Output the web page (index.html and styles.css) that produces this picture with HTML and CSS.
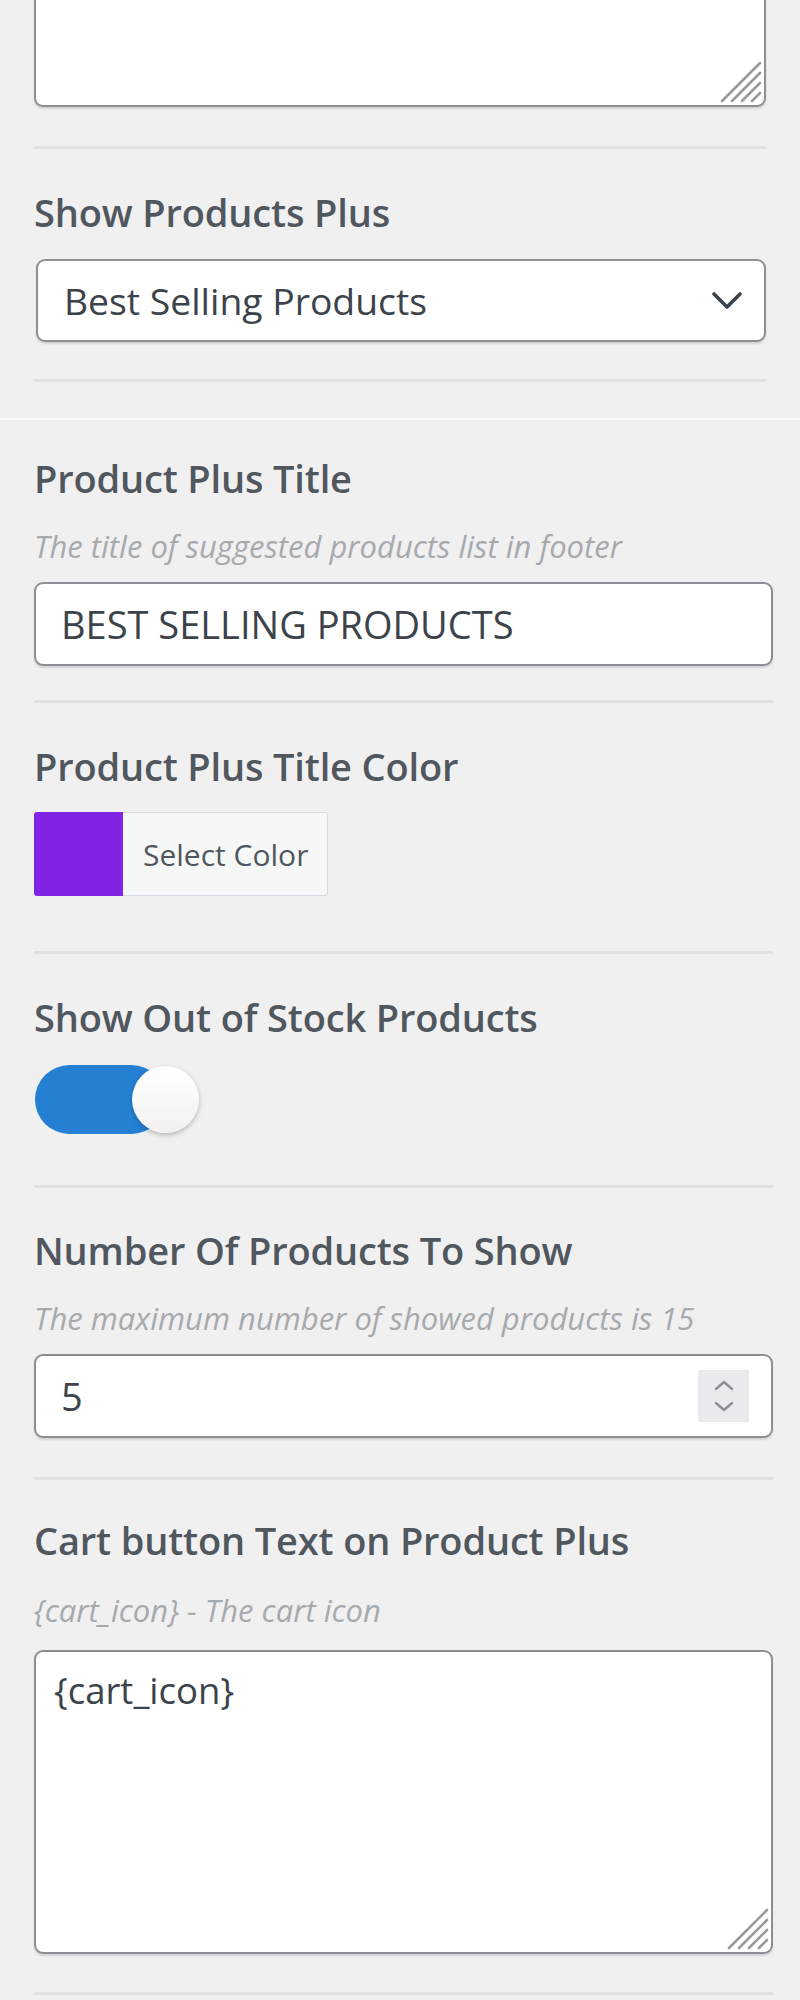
FILE: index.html
```html
<!DOCTYPE html>
<html>
<head>
<meta charset="utf-8">
<link rel="stylesheet" href="styles.css">
</head>
<body>
<div class="panel">
  <div class="sec sec-a">
    <div class="field field-first">
      <div class="area area-top">
        <svg class="grip" width="44" height="44" viewBox="0 0 44 44"><g stroke="#9a9a9c" stroke-width="2.6" stroke-linecap="round"><line x1="4" y1="42" x2="42" y2="4"/><line x1="14" y1="42" x2="42" y2="14"/><line x1="24" y1="42" x2="42" y2="24"/><line x1="34" y1="42" x2="42" y2="34"/></g></svg>
      </div>
    </div>
    <div class="field">
      <div class="label">Show Products Plus</div>
      <div class="box select">
        <span class="val">Best Selling Products</span>
        <svg class="chev" width="34" height="20" viewBox="0 0 34 20"><polyline points="4,3 17,16 30,3" fill="none" stroke="#3c434a" stroke-width="3.6" stroke-linecap="round" stroke-linejoin="round"/></svg>
      </div>
    </div>
  </div>
  <div class="sec sec-b">
    <div class="field field-b1">
      <div class="label">Product Plus Title</div>
      <div class="help">The title of suggested products list in footer</div>
      <div class="box input"><span class="val">BEST SELLING PRODUCTS</span></div>
    </div>
    <div class="field field-pick">
      <div class="label">Product Plus Title Color</div>
      <div class="picker">
        <span class="swatch"></span>
        <span class="picker-text">Select Color</span>
      </div>
    </div>
    <div class="field field-tog">
      <div class="label">Show Out of Stock Products</div>
      <div class="toggle"><span class="knob"></span></div>
    </div>
    <div class="field field-num">
      <div class="label">Number Of Products To Show</div>
      <div class="help">The maximum number of showed products is 15</div>
      <div class="box input num">
        <span class="val">5</span>
        <span class="spin">
          <svg width="24" height="40" viewBox="0 0 24 40"><g fill="none" stroke="#8c8f94" stroke-width="2.4" stroke-linecap="round" stroke-linejoin="round"><polyline points="4,13 12,6 20,13"/><polyline points="4,27 12,34 20,27"/></g></svg>
        </span>
      </div>
    </div>
    <div class="field field-cart">
      <div class="label">Cart button Text on Product Plus</div>
      <div class="help help-cart">{cart_icon} - The cart icon</div>
      <div class="area area-cart">
        <span class="area-text">{cart_icon}</span>
        <svg class="grip" width="44" height="44" viewBox="0 0 44 44"><g stroke="#9a9a9c" stroke-width="2.6" stroke-linecap="round"><line x1="4" y1="42" x2="42" y2="4"/><line x1="14" y1="42" x2="42" y2="14"/><line x1="24" y1="42" x2="42" y2="24"/><line x1="34" y1="42" x2="42" y2="34"/></g></svg>
      </div>
    </div>
  </div>
</div>
</body>
</html>
```
FILE: styles.css
```css
html, body {
  margin: 0;
  padding: 0;
  background: #f0f0f1;
}
body {
  font-family: "Open Sans", "Noto Sans", sans-serif;
  color: #50575e;
}
.panel {
  width: 800px;
}
.sec-a {
  padding: 0 34px 36px 34px;
  border-bottom: 2px solid #fbfbfb;
}
.sec-b {
  padding: 0 27px 0 34px;
}
.field {
  padding: 37px 0 37px 0;
  border-bottom: 3px solid #e1e1e3;
}
.field-first {
  padding-top: 0;
  padding-bottom: 39px;
}
.field-b1 {
  padding-top: 32px;
  padding-bottom: 34px;
}
.field-pick {
  padding-bottom: 55px;
}
.field-tog {
  padding-bottom: 51px;
}
.field-num {
  padding-top: 36px;
  padding-bottom: 39px;
}
.field-cart {
  padding-top: 34px;
  padding-bottom: 38px;
}
.label {
  font-size: 38px;
  letter-spacing: -0.15px;
  line-height: 52px;
  font-weight: 600;
  color: #50575e;
  white-space: nowrap;
}
.help {
  margin-top: 24px;
  font-size: 31px;
  line-height: 36px;
  font-style: italic;
  color: #a7aaad;
  white-space: nowrap;
}
.help-cart {
  margin-top: 26px;
}
.box {
  box-sizing: border-box;
  background: #fff;
  border: 2px solid #8c8f94;
  border-radius: 9px;
  box-shadow: 0 2px 2px rgba(0, 0, 0, 0.12);
  display: flex;
  align-items: center;
  height: 84px;
  font-size: 38px;
  color: #3c434a;
}
.select {
  margin-top: 21px;
  margin-left: 2px;
  height: 83px;
  padding: 0 20px 0 26px;
  justify-content: space-between;
  font-size: 37.3px;
}
.input {
  margin-top: 18px;
  padding: 0 22px 0 25px;
}
.num {
  justify-content: space-between;
}
.val {
  white-space: nowrap;
}
.spin {
  width: 51px;
  height: 52px;
  background: #e9e9ee;
  display: flex;
  align-items: center;
  justify-content: center;
}
.area {
  position: relative;
  box-sizing: border-box;
  background: #fff;
  border: 2px solid #8c8f94;
  box-shadow: 0 2px 2px rgba(0, 0, 0, 0.12);
}
.area-top {
  height: 107px;
  border-top: 0;
  border-radius: 0 0 9px 9px;
}
.area-cart {
  margin-top: 22px;
  height: 304px;
  border-radius: 9px;
  padding: 14px 18px;
}
.area-text {
  font-size: 36.5px;
  line-height: 48px;
  color: #3c434a;
}
.grip {
  position: absolute;
  right: 2px;
  bottom: 2px;
}
.picker {
  margin-top: 20px;
  display: flex;
  width: 294px;
  height: 84px;
}
.swatch {
  width: 89px;
  background: #8224e3;
  border-radius: 3px 0 0 3px;
}
.picker-text {
  flex: 1;
  box-sizing: border-box;
  display: flex;
  align-items: center;
  padding-left: 20px;
  background: #f6f7f7;
  border: 1px solid #dcd8e6;
  border-left: 0;
  border-radius: 0 3px 3px 0;
  font-size: 30px;
  color: #50575e;
  white-space: nowrap;
}
.toggle {
  position: relative;
  margin-top: 22px;
  margin-left: 1px;
  width: 131px;
  height: 69px;
  border-radius: 35px;
  background: #2580d4;
}
.knob {
  position: absolute;
  left: 97px;
  top: 1px;
  width: 67px;
  height: 67px;
  border-radius: 50%;
  background: linear-gradient(#ffffff, #f1f1f1);
  box-shadow: 0 2px 5px rgba(0, 0, 0, 0.25);
}
```
